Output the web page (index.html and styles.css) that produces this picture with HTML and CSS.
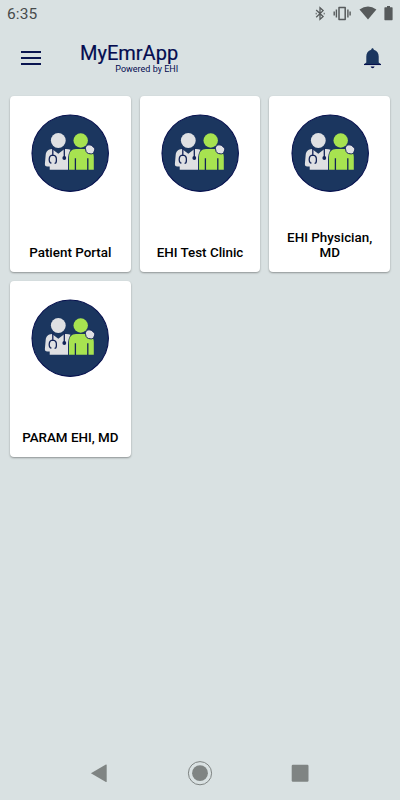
FILE: index.html
```html
<!DOCTYPE html>
<html lang="en">
<head>
	<meta charset="UTF-8">
	<meta name="viewport" content="width=device-width, initial-scale=1">
	<title>MyEmrApp</title>
	<link rel="stylesheet" href="styles.css">
</head>
<body>
	<!-- shared card icon -->
	<svg class="sprite">
		<symbol id="clinic" viewBox="0 0 78 78">
			<circle cx="39.2" cy="39.2" r="38.2" fill="#1b365f" stroke="#06104e" stroke-width="1.1"/>
			<!-- doctor -->
			<circle cx="27.3" cy="26.5" r="7.4" fill="#dfe0e3"/>
			<path d="M21 35 L27.3 39.7 L33.5 35 C36 34.8 38 35 39.5 35.8 C37.8 38.5 37 42 37 46 V55.7 H18.7 V52.5 H16.2 C14.4 52.5 13.8 51.5 13.9 49.7 L14.7 40.7 C15.1 37.2 17 35.4 21 35Z" fill="#dfe0e3"/>
			<path d="M21.8 33.5 V41.2 M20.4 49 C18.4 49 18.2 47 18.2 45.2 C18.4 42.4 20 41.2 21.8 41.2 C24.4 41.4 25.6 43.5 25.4 46.2 C25.4 48.4 25 49.4 23.6 49.4 M33.3 33.5 V43" fill="none" stroke="#122358" stroke-width="1.3"/>
			<circle cx="33.3" cy="44" r="1.9" fill="#122358"/>
			<!-- patient -->
			<circle cx="49.7" cy="26.5" r="7.2" fill="#a7e350"/>
			<path d="M45 35.1 H54.5 C59.5 35.1 62.8 38.2 62.8 43 V55.7 H38 V43 C38 38.2 40.5 35.1 45 35.1Z" fill="#a7e350"/>
			<path d="M44.4 44.2 V56 M56.8 44.2 V56" stroke="#122358" stroke-width="1.3"/>
			<path d="M54.7 35.8 C53.7 32.5 56.2 30.2 59.2 31 C61 31.2 61.2 32.2 62.2 33 C63.8 33.8 64 35.2 63.4 36.8 C62.6 39.4 61.4 40.2 59.2 39.8 C56.7 39.7 54.9 38.5 54.7 35.8Z" fill="#dfe0e3" stroke="#122358" stroke-width="1"/>
		</symbol>
	</svg>

	<div class="status-bar">
		<span class="time">6:35</span>
		<div class="status-icons">
			<svg width="9" height="14" viewBox="0 0 9 14"><path d="M.2 3 L7.1 9.6 L4 12.4 V.8 L7.1 3.6 L.2 10.2" fill="none" stroke="#565a5b" stroke-width="1.3"/><path d="M.2 5.8 V7.4 M8.2 5.8 V7.4" stroke="#565a5b" stroke-width="1"/></svg>
			<svg width="18" height="14" viewBox="0 0 18 14"><path d="M6 .4 H12.2 V12.6 H6Z" fill="none" stroke="#565a5b" stroke-width="1.5" stroke-linejoin="round"/><path d="M3.4 2.6 V10.6 M14.9 2.6 V10.6 M1.2 4.6 V8.6 M17.1 4.6 V8.6" stroke="#565a5b" stroke-width="1.4"/></svg>
			<svg width="17" height="14" viewBox="0 0 17 14"><path d="M.5 2.4 Q9 -3.4 17.4 2.4 L9 12.6Z" fill="#565a5b"/></svg>
			<svg width="9" height="14" viewBox="0 0 9 14"><path d="M3 -1 H6 V.3 H8 Q8.6 .3 8.6 1 V12.4 Q8.6 13.2 8 13.2 H1 Q.4 13.2 .4 12.4 V1 Q.4 .3 1 .3 H3Z" fill="#565a5b"/></svg>
		</div>
	</div>

	<div class="header">
		<div class="menu">
			<span></span>
			<span></span>
			<span></span>
		</div>
		<div class="brand">
			<div class="brand-name">MyEmrApp</div>
			<div class="brand-sub">Powered by EHI</div>
		</div>
		<svg class="bell" width="18" height="21" viewBox="0 0 18 21"><path d="M7.2 1.8 C7.2 -.3 9.8 -.3 9.8 1.8 C13.1 2.8 14.7 5.3 14.7 8.5 V14.4 L17 16.2 V17 H0 V16.2 L2.3 14.4 V8.5 C2.3 5.3 3.9 2.8 7.2 1.8Z" fill="#1b365f"/><path d="M0 16.5 H17" stroke="#06104e" stroke-width="1.1"/><path d="M6.6 18.5 H10.6 Q10.1 20.2 8.6 20.2 Q7.1 20.2 6.6 18.5Z" fill="#06104e"/></svg>
	</div>

	<div class="cards">
		<div class="card">
			<svg class="card-icon"><use href="#clinic"/></svg>
			<div class="card-title">Patient Portal</div>
		</div>
		<div class="card">
			<svg class="card-icon"><use href="#clinic"/></svg>
			<div class="card-title">EHI Test Clinic</div>
		</div>
		<div class="card">
			<svg class="card-icon"><use href="#clinic"/></svg>
			<div class="card-title">EHI Physician, MD</div>
		</div>
		<div class="card">
			<svg class="card-icon"><use href="#clinic"/></svg>
			<div class="card-title">PARAM EHI, MD</div>
		</div>
	</div>

	<div class="nav-bar">
		<svg width="26" height="26" viewBox="0 0 26 26"><path d="M3.9 13.2 L18.9 4.5 Q19.7 4.2 19.7 5 V21.4 Q19.7 22.2 18.9 21.9Z" fill="#7f8483"/></svg>
		<svg width="26" height="26" viewBox="0 0 26 26"><circle cx="13" cy="13.2" r="11.6" fill="none" stroke="#7f8483" stroke-width="1"/><circle cx="13" cy="13.2" r="7.9" fill="#7f8483"/></svg>
		<svg width="26" height="26" viewBox="0 0 26 26"><rect x="4.7" y="4.8" width="16.8" height="17" rx="1.2" fill="#7f8483"/></svg>
	</div>
</body>
</html>
```
FILE: styles.css
```css
* {
	margin: 0;
	padding: 0;
	box-sizing: border-box;
}
body {
	display: flex;
	flex-direction: column;
	height: 100vh;
	background-color: #d9e1e2;
	font-family: Roboto, "Liberation Sans", sans-serif;
}
svg {
	display: block;
}
.sprite {
	display: none;
}
.status-bar {
	display: flex;
	justify-content: space-between;
	height: 28px;
	padding: 6px 7px 0;
}
.time {
	font-size: 15.5px;
	line-height: 16px;
	color: #474b4c;
	letter-spacing: 0.1px;
}
.status-icons {
	display: flex;
	gap: 8px;
	padding-top: 1px;
}
.status-icons svg {
	overflow: visible;
}
.header {
	display: flex;
	height: 68px;
	padding: 0 18px 0 21px;
}
.menu {
	display: flex;
	flex-direction: column;
	gap: 4px;
	width: 20px;
	margin-top: 23px;
}
.menu span {
	height: 2px;
	background-color: #0a1550;
}
.brand {
	margin: 13px auto 0 39px;
	color: #040c50;
	text-align: right;
}
.brand-name {
	font-size: 20px;
	line-height: 24px;
	-webkit-text-stroke: 0.2px #040c50;
}
.brand-sub {
	font-size: 9px;
	line-height: 10px;
	margin-top: -1px;
}
.bell {
	margin-top: 20px;
}
.cards {
	display: grid;
	grid-template-columns: repeat(3, 1fr);
	grid-auto-rows: 176px;
	gap: 9px;
	padding: 0 10px;
}
.card {
	display: flex;
	flex-direction: column;
	justify-content: space-between;
	align-items: center;
	padding: 18px 10px 12px;
	background-color: #fff;
	border-radius: 4px;
	box-shadow: 0 1px 2px rgba(0, 0, 0, 0.35);
}
.card-icon {
	width: 78px;
	height: 78px;
}
.card-title {
	font-size: 13.4px;
	font-weight: 500;
	line-height: 15px;
	color: #000;
	text-align: center;
}
.nav-bar {
	display: flex;
	justify-content: center;
	gap: 74px;
	margin-top: auto;
	padding-bottom: 14px;
}
```
